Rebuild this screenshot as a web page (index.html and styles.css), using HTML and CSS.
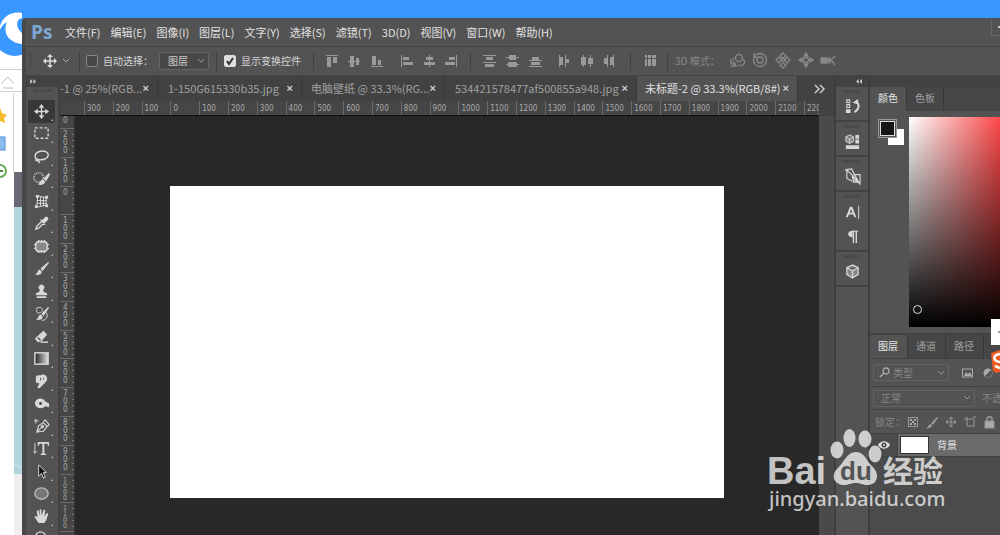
FILE: index.html
```html
<!DOCTYPE html>
<html lang="zh-CN">
<head>
<meta charset="utf-8">
<title>Ps</title>
<link rel="stylesheet" href="styles.css">
</head>
<body>
<svg class="browser" width="22" height="535" viewBox="0 0 22 535" aria-hidden="true">
  <rect width="22" height="535" fill="#fff"/><rect width="22" height="27" fill="#3898ff"/>
  <circle cx="20" cy="35" r="22" fill="#fff"/><circle cx="15" cy="34" r="22" fill="#3898ff"/>
  <path d="M0 26C3 16 12 11 22 13V18C16 19 15 27 22 33V44C10 43 2 34 7 22C3 24 1 27 0 30Z" fill="#fff"/>
  <path d="M0 69.500H22M0 91.500H22M13.500 93V172" stroke="#d2d2d2"/>
  <path d="M1 84L8 77L14 84M3 88H13" fill="none" stroke="#bbb"/>
  <path d="M0 108L2 113L7 115L4 118L5 123L0 121Z" fill="#f5bd2c"/>
  <rect x="-4" y="137" width="9" height="13" fill="#8bbcf0" stroke="#4e8fd6"/>
  <circle cx="0" cy="171" r="6" fill="#fff" stroke="#67a957" stroke-width="2"/><path d="M0 171H3" stroke="#448c34" stroke-width="2"/>
  <rect x="14" y="172" width="8" height="35" fill="#6b6974"/><rect x="14" y="207" width="8" height="267" fill="#b0d5dd"/>
  <rect x="14" y="474" width="8" height="61" fill="#eee"/><path d="M14 464L22 468" stroke="#d7e9ed"/>
</svg>
<main class="ps">
  <header class="menubar">
    <span class="logo">Ps</span>
    <nav class="menus"><button>文件(F)</button><button>编辑(E)</button><button>图像(I)</button><button>图层(L)</button><button>文字(Y)</button><button>选择(S)</button><button>滤镜(T)</button><button>3D(D)</button><button>视图(V)</button><button>窗口(W)</button><button>帮助(H)</button></nav>
    <button class="minimize" aria-label="最小化"></button>
  </header>
  <div class="options">
    <i class="grip"></i>
    <svg class="move-icon" width="30" height="16" viewBox="0 0 30 16"><g fill="none" stroke="#ddd" stroke-width="1.500"><path d="M8 3V13M3 8H13"/><path d="M21 6L24 9L27 6" stroke="#aaa" stroke-width="1"/></g><path d="M8 1L11 4H5ZM8 15L5 12H11ZM1 8L4 5V11ZM15 8L12 11V5Z" fill="#ddd"/></svg>
    <i class="rule"></i>
    <label class="check auto"><input type="checkbox">自动选择：</label>
    <select class="layer-select" aria-label="选择对象"><option>图层</option></select>
    <i class="rule"></i>
    <label class="check"><input type="checkbox" checked>显示变换控件</label>
    <i class="rule wide"></i>
    <svg class="align-icons" width="131" height="16" viewBox="0 0 131 16" fill="#999"><path d="M0 2H12V3H0ZM1 4H5V14H1ZM7 4H11V10H7ZM22 8H34V9H22ZM24 3H28V14H24ZM30 5H33V12H30ZM45 13H57V14H45ZM46 3H50V12H46ZM52 7H55V12H52ZM75 2H76V14H75ZM77 4H83V7H77ZM77 9H87V12H77ZM103 2H104V14H103ZM100 4H107V7H100ZM98 9H109V12H98ZM130 2H131V14H130ZM123 4H129V7H123ZM119 9H129V12H119Z"/></svg>
    <i class="rule wide"></i>
    <svg class="align-icons" width="134" height="16" viewBox="0 0 134 16" fill="#999"><path d="M0 2H13V3H0ZM3 4H10V7H3ZM0 9H13V10H0ZM2 11H11V14H2ZM23 4H36V5H23ZM26 2H33V7H26ZM23 11H36V12H23ZM25 9H34V14H25ZM46 7H59V8H46ZM49 4H56V7H49ZM46 13H59V14H46ZM48 9H57V12H48ZM76 2H77V14H76ZM77 4H80V12H77ZM82 2H83V14H82ZM83 6H86V10H83ZM100 2H101V14H100ZM98 4H103V12H98ZM107 2H108V14H107ZM105 5H110V11H105ZM121 5H124V11H121ZM124 2H125V14H124ZM127 4H130V12H127ZM130 2H131V14H130Z"/></svg>
    <i class="rule wide"></i>
    <svg class="dist" width="12" height="16" viewBox="0 0 12 16"><path d="M1 2H3V5H1ZM4 2H7V5H4ZM8 2H12V5H8ZM1 6H3V13H1ZM4 6H7V13H4ZM8 6H12V13H8Z" fill="#999"/></svg>
    <i class="rule"></i>
    <span class="mode">3D 模式：</span>
    <svg class="modes" width="108" height="18" viewBox="0 0 108 18" fill="none" stroke="#888" stroke-width="1.300"><circle cx="10" cy="6" r="3.500"/><path d="M6 6C-1 8 1 13 7 12M13 6C19 11 13 15 9 13M4 9L7 14H2"/><circle cx="31" cy="8" r="6.500"/><circle cx="31" cy="8" r="3"/><path d="M25 1V5H28"/><path d="M54 1L57 4L54 6L51 4ZM54 11L57 13L54 16L51 13ZM47 8L50 5L52 8L50 11ZM61 8L58 5L56 8L58 11Z"/><circle cx="54" cy="8" r="1.500"/><circle cx="77" cy="8" r="2.500"/><path d="M77 1L79 4H75ZM77 15L79 12H75ZM70 8L73 6V10ZM84 8L81 6V10Z" fill="#888"/><path d="M92 6H98V11H92ZM98 8L101 6V11L98 9Z" fill="#888"/><path d="M106 4L102 8L106 13"/></svg>
  </div>
  <div class="workspace">
    <aside class="toolbox">
      <div class="collapse"><svg width="7" height="5" viewBox="0 0 8 6"><path d="M0 0L3 3L0 6ZM4 0L7 3L4 6Z" fill="#ccc"/></svg></div>
      <i class="hgrip"></i>
      <div class="tools">
        <button class="on" aria-label="移动"><svg viewBox="0 0 18 18"><path d="M9 4V14M4 9H14"/><path class="f" d="M9 1L12 5H6ZM9 17L6 13H12ZM1 9L5 6V12ZM17 9L13 12V6Z"/></svg></button>
        <button aria-label="矩形选框"><svg viewBox="0 0 18 18"><rect x="2" y="3" width="14" height="11" stroke-dasharray="3 2"/></svg></button>
        <button aria-label="套索"><svg viewBox="0 0 18 18"><path d="M6 12C1 12 1 6 6 4S17 4 16 8S9 13 6 12ZM6 12C2 10 2 15 6 13L7 16"/></svg></button>
        <button aria-label="快速选择"><svg viewBox="0 0 18 18"><circle cx="6" cy="8" r="5" stroke-dasharray="1 1"/><path class="f" d="M17 3L11 9L14 12L18 5ZM10 10C7 11 8 14 5 15C9 17 13 15 13 12Z"/></svg></button>
        <button aria-label="透视裁剪"><svg viewBox="0 0 18 18"><path d="M5 3L14 5V13L4 15ZM8 4V14M11 4V14M4 8H14M4 11H14" stroke-width="1"/><path class="f" d="M3 2H6V5H3ZM13 3H16V6H13ZM2 13H5V16H2ZM13 12H16V15H13Z"/></svg></button>
        <button aria-label="吸管"><svg viewBox="0 0 18 18"><path d="M3 15L4 12L10 6L12 8L6 14ZM8 5L13 10"/><path class="f" d="M9 6L13 2C15 1 17 3 16 5L12 9Z"/></svg></button>
        <button aria-label="修补"><svg viewBox="0 0 18 18"><rect x="3" y="4" width="12" height="10" rx="3" fill="#888"/><path d="M6 2V4M9 2V4M12 2V4M6 14V16M9 14V16M12 14V16M1 7H3M1 11H3M15 7H17M15 11H17"/></svg></button>
        <button aria-label="画笔"><svg viewBox="0 0 18 18"><path class="f" d="M16 2L8 9L10 12L17 3ZM7 10C4 11 6 14 2 15C6 17 10 15 9 12Z"/></svg></button>
        <button aria-label="仿制图章"><svg viewBox="0 0 18 18"><path class="f" d="M7 9V7A3 3 0 1 1 11 7V9L15 11V13H3V11ZM4 14H14V16H4Z"/></svg></button>
        <button aria-label="历史记录画笔"><svg viewBox="0 0 18 18"><path d="M3 4C8 0 13 5 8 8C4 10 2 6 5 5M14 8C17 13 13 17 9 16" stroke-width="1"/><path class="f" d="M16 2L9 9L11 12L17 3ZM8 10C5 11 6 15 3 15C7 17 11 15 10 12Z"/></svg></button>
        <button aria-label="橡皮擦"><svg viewBox="0 0 18 18"><path class="f" d="M2 11L11 3L15 7L9 14L5 15Z"/><path d="M8 15H16"/><path d="M5 10L8 13" stroke="#555"/></svg></button>
        <button aria-label="渐变"><svg viewBox="0 0 18 18"><defs><linearGradient id="gr"><stop stop-color="#222"/><stop offset="1" stop-color="#ddd"/></linearGradient></defs><rect x="2" y="3" width="14" height="12" fill="url(#gr)"/></svg></button>
        <button aria-label="涂抹"><svg viewBox="0 0 18 18"><path class="f" d="M3 4C5 1 8 3 9 2C12 0 17 4 14 9L8 15C7 17 4 16 5 14L7 11L3 10Z"/><path d="M8 5V8M11 5V7" stroke="#555" stroke-width="1"/></svg></button>
        <button aria-label="加深"><svg viewBox="0 0 18 18"><path class="f" d="M2 8C4 2 11 3 13 7L17 9V13L13 12C9 16 2 14 2 8Z"/><circle cx="8" cy="9" r="1.500" fill="#444" stroke="none"/></svg></button>
        <button aria-label="钢笔"><svg viewBox="0 0 18 18"><path d="M4 15L6 8L11 5L15 9L11 14ZM4 15L9 10M11 4L13 2L17 7L15 9" stroke-width="1.200"/><circle cx="10" cy="9" r="1"/><path d="M3 1V6M1 3H6" stroke-width="1"/></svg></button>
        <button aria-label="文字"><svg viewBox="0 0 18 18"><path class="f" d="M5 2H17V6H16L15 4H12V14L14 15V16H8V15L10 14V4H7L6 6H5Z"/><path d="M2 3V14M0 12L2 14L4 12" stroke-width="1"/></svg></button>
        <button aria-label="选择"><svg viewBox="0 0 18 18"><path d="M6 2V14L9 11L11 16L13 15L11 10H14Z" fill="#111" stroke-width="1"/></svg></button>
        <button aria-label="椭圆"><svg viewBox="0 0 18 18"><ellipse cx="9" cy="9" rx="7" ry="6" fill="#777" stroke="#bbb"/></svg></button>
        <button aria-label="抓手"><svg viewBox="0 0 18 18"><path class="f" d="M6 16L2 10C1 8 3 8 4 9L5 10L4 4C4 2 6 2 6 4L7 8V2C7 1 9 1 9 2V8L11 3C11 1 13 2 13 3L12 9L14 6C15 5 17 6 16 7L14 13L12 16Z"/></svg></button>
        <button aria-label="缩放"><svg viewBox="0 0 18 18"><circle cx="8" cy="7" r="5"/><path d="M12 11L16 16"/></svg></button>
      </div>
    </aside>
    <section class="document">
      <div class="doc-tabs">
        <div class="doc-tab t1"><span>-1 @ 25%(RGB...</span><button aria-label="关闭">×</button></div>
        <div class="doc-tab t2"><span>1-150G615330b35.jpg</span><button aria-label="关闭">×</button></div>
        <div class="doc-tab t3"><span>电脑壁纸 @ 33.3%(RG...</span><button aria-label="关闭">×</button></div>
        <div class="doc-tab t4"><span>534421578477af500855a948.jpg</span><button aria-label="关闭">×</button></div>
        <div class="doc-tab active t5"><span>未标题-2 @ 33.3%(RGB/8#)</span><button aria-label="关闭">×</button></div>
        <button class="more" aria-label="更多"><svg width="12" height="10" viewBox="0 0 12 10"><path d="M1 1L5 5L1 9M6 1L10 5L6 9" fill="none" stroke="#ccc" stroke-width="1.500"/></svg></button>
      </div>
      <div class="hruler"><div class="hcells"><span>300</span><span>200</span><span>100</span><span>0</span><span>100</span><span>200</span><span>300</span><span>400</span><span>500</span><span>600</span><span>700</span><span>800</span><span>900</span><span>1000</span><span>1100</span><span>1200</span><span>1300</span><span>1400</span><span>1500</span><span>1600</span><span>1700</span><span>1800</span><span>1900</span><span>2000</span><span>2100</span></div><span class="last">2200</span></div>
      <div class="stage">
        <div class="vruler"><b>0</b><div class="vcells"><span>200</span><span>100</span><span>0</span><span>100</span><span>200</span><span>300</span><span>400</span><span>500</span><span>600</span><span>700</span><span>800</span><span>900</span><span class="k">1000</span><span class="k">1100</span><span></span></div></div>
        <div class="canvas"><div class="page"></div></div>
        <div class="vscroll"></div>
      </div>
    </section>
    <aside class="dock">
      <div class="collapse"><svg width="7" height="5" viewBox="0 0 8 6"><path d="M3 0L0 3L3 6ZM7 0L4 3L7 6Z" fill="#ccc"/></svg></div>
      <div class="group"><i class="hgrip"></i><button aria-label="历史记录"><svg viewBox="0 0 18 18"><path d="M3 2H6V5H3ZM3 7H6V10H3Z" stroke-width="1.200"/><path d="M13 4C17 7 16 12 11 15" stroke-width="2"/><path class="f" d="M2 12H7V16H2ZM9 5L15 1V7Z"/></svg></button></div>
      <div class="group"><i class="hgrip"></i><button aria-label="属性"><svg viewBox="0 0 18 18"><path d="M6 2L10 4V9L6 11L2 9V4ZM2 4L6 6L10 4M6 6V11" fill="#888" stroke-width="1"/><path class="f" d="M12 2H16V6H12ZM12 7H16V11H12ZM2 13H16V17H2Z"/></svg></button></div>
      <div class="group"><i class="hgrip"></i><button aria-label="画笔预设"><svg viewBox="0 0 18 18"><path d="M1 2L8 1L16 16L9 11V8L3 2V11L9 14M10 7H17V17L10 9V15H16" stroke-width="1.200"/></svg></button></div>
      <div class="group"><i class="hgrip"></i><button aria-label="字符"><svg viewBox="0 0 18 18"><path d="M3 14L7 4H8L12 14M5 10H10" stroke-width="2"/><path d="M15.500 2V16" stroke-width="1"/></svg></button><button aria-label="段落"><svg viewBox="0 0 18 18"><path class="f" d="M8 3H15V4H8ZM9 3V10C3 10 3 3 9 3Z"/><path d="M10 3V16M13 3V16"/></svg></button></div>
      <div class="group"><i class="hgrip"></i><button aria-label="3D"><svg viewBox="0 0 18 18"><path d="M9 2L15 5V12L9 16L3 12V5ZM3 5L9 8L15 5M9 8V16" fill="#888" stroke-width="1.300"/></svg></button></div>
    </aside>
    <aside class="panels">
      <div class="collapse"></div>
      <section class="color">
        <div class="tabs"><button class="active">颜色</button><button>色板</button></div>
        <div class="color-body">
          <div class="swatches"><svg width="27" height="28" viewBox="0 0 27 28"><rect x="10" y="10" width="16" height="16" fill="#fff"/><rect x="0.500" y="0.500" width="18" height="18" fill="#535353" stroke="#999"/><rect x="2.500" y="2.500" width="14" height="14" fill="#151515" stroke="#ddd"/></svg></div>
          <div class="field"><i class="marker"></i></div>
        </div>
      </section>
      <section class="layers">
        <div class="tabs"><button class="active">图层</button><button>通道</button><button>路径</button></div>
        <div class="filter"><div class="search"><svg width="12" height="12" viewBox="0 0 12 12"><circle cx="7" cy="4" r="3" fill="none" stroke="#aaa" stroke-width="1.300"/><path d="M5 6L1 10" stroke="#aaa" stroke-width="1.500"/></svg><select aria-label="类型"><option>类型</option></select></div>
          <svg class="filter-icons" width="34" height="12" viewBox="0 0 34 12"><rect x="1.500" y="2" width="10" height="8" fill="none" stroke="#aaa"/><path d="M3 9L5 5L7 7L9 5L11 9Z" fill="#aaa"/><circle cx="27" cy="6" r="4.500" fill="#aaa"/><path d="M30 3A4 4 0 0 1 24 9Z" fill="#555"/></svg></div>
        <div class="blend"><select aria-label="混合模式"><option>正常</option></select><span>不透明度</span></div>
        <div class="lock"><span>锁定：</span><svg width="90" height="14" viewBox="0 0 90 14" fill="none" stroke="#999"><rect x="1.500" y="2.500" width="9" height="9"/><path d="M3 4H5V6H3ZM7 4H9V6H7ZM5 6H7V8H5ZM3 8H5V10H3ZM7 8H9V10H7Z" fill="#aaa" stroke="none"/><path d="M30 2L24 8L26 10L31 3ZM23 9C21 10 22 12 19 13C23 14 25 12 25 10Z" fill="#999" stroke="none"/><path d="M44 2V12M39 7H49M42 4L44 2L46 4M42 10L44 12L46 10M41 5L39 7L41 9M47 5L49 7L47 9M60 2V11H66M57 4H67V12M66 2H69"/><path d="M78 6H87V13H78Z" fill="#aaa"/><path d="M80 6V4C80 1 85 1 85 4V6" stroke-width="1.500"/></svg></div>
        <div class="layer"><button class="eye" aria-label="可见"><svg width="12" height="10" viewBox="0 0 12 10"><path d="M0 5C3 0 9 0 12 5C9 10 3 10 0 5Z" fill="#ddd"/><circle cx="6" cy="5" r="2.500" fill="#444"/><circle cx="6" cy="5" r="1" fill="#ddd"/></svg></button><div class="row"><i class="thumb"></i><span>背景</span></div></div>
      </section>
    </aside>
  </div>
</main>
<svg class="ime" width="9" height="56" viewBox="0 0 9 56" aria-hidden="true"><path d="M0 0H9V26H0Z" fill="#fff"/><path d="M7 13H9" stroke="#333"/><path d="M0 34L9 31V53L5 54L2 52Z" fill="#f15a24"/><path d="M9 35C1 36 2 42 9 43M4 47L9 49" fill="none" stroke="#fff" stroke-width="2.500"/></svg>
<svg class="watermark" width="190" height="90" viewBox="0 0 190 90" aria-label="Baidu 经验">
  <g fill="#fff" fill-opacity="0.72"><text class="wm-bai" x="1" y="56">Bai</text>
  <ellipse cx="71" cy="22" rx="6.500" ry="8.500"/><ellipse cx="83.500" cy="10" rx="6" ry="9"/><ellipse cx="99" cy="11" rx="6.500" ry="8.500"/><ellipse cx="109" cy="26" rx="6.500" ry="8.500"/>
  <path d="M90 24C99 24 100 33 107 39C115 48 110 57 102 57C96 57 95 55 90 55C85 55 83 57 78 57C68 57 64 47 72 40C79 33 81 24 90 24Z"/>
  <text class="wm-cjk" x="117" y="54">经验</text><text class="wm-url" x="3" y="78">jingyan.baidu.com</text></g>
  <text class="wm-du" x="74" y="52">du</text>
</svg>
</body>
</html>
```
FILE: styles.css
```css
* { box-sizing: border-box; }
body { margin: 0; height: 100vh; overflow: hidden; position: relative; background: #3898ff; color: #ccc; font: 10px/14px "Noto Sans CJK SC", sans-serif; }
button { border: 0; padding: 0; background: none; color: inherit; font: inherit; }
select { appearance: none; border: 1px solid #646464; border-radius: 2px; font: inherit; color: inherit; padding: 0 8px; background: #484848 url("data:image/svg+xml,%3Csvg xmlns='http://www.w3.org/2000/svg' width='8' height='6'%3E%3Cpath d='M1 1L4 4L7 1' fill='none' stroke='%23999'/%3E%3C/svg%3E") no-repeat right 3px center; }
.browser { position: absolute; left: 0; top: 0; }
.ps { margin: 18px 0 0 22px; height: calc(100vh - 18px); display: flex; flex-direction: column; background: #535353; border-left: 3px solid #484848; border-top: 1px solid #484f57; border-top-left-radius: 4px; overflow: hidden; }
.menubar { height: 27px; flex: none; display: flex; align-items: center; padding-left: 6px; padding-bottom: 2px; }
.logo { width: 34px; font: bold 19px/24px "Open Sans", sans-serif; color: #7da7d3; }
.menus { display: flex; gap: 10px; font-size: 11px; color: #e2e2e2; flex: 1; white-space: nowrap; }
.minimize { align-self: start; width: 9px; height: 17px; border: 1px solid #666; border-width: 0 0 1px 1px; }
.minimize::after { content: ""; display: block; margin: 0 0 0 6px; width: 2px; height: 2px; background: #ccc; }
.options { height: 30px; flex: none; display: flex; align-items: center; border-top: 1px solid #424242; border-bottom: 1px solid #424242; border-left: 1px solid #424242; padding-left: 3px; white-space: nowrap; }
.grip { width: 3px; height: 16px; background: repeating-linear-gradient(#444 0 1px, #555 1px 2px); }
.move-icon { margin-left: 10px; }
.rule { width: 1px; height: 19px; background: #424242; margin: 0 7px; flex: none; }
.rule.wide { margin: 0 10px 0 12px; }
.move-icon + .rule { margin: 0 6px 0 7px; }
.check { display: flex; align-items: center; gap: 5px; color: #d5d5d5; }
.check.auto { width: 73px; }
.auto + .layer-select { margin-left: 0; }
.check input { appearance: none; width: 12px; height: 12px; margin: 0; border: 1px solid #888; border-radius: 2px; background: #464646; flex: none; }
.check input:checked { border-color: #ddd; background: #ddd url("data:image/svg+xml,%3Csvg xmlns='http://www.w3.org/2000/svg' width='10' height='10'%3E%3Cpath d='M2 5L4 8L8 2' fill='none' stroke='%23333' stroke-width='2'/%3E%3C/svg%3E"); }
.layer-select { width: 50px; height: 18px; }
.align-icons { margin: 0 1px 0 2px; }
.dist { margin: 0 4px 0 3px; }
.mode { color: #888; width: 54px; }
.workspace { flex: 1; min-height: 0; display: flex; background: #424242; }
.collapse { height: 11px; flex: none; background: #424242; display: flex; align-items: center; }
.hgrip { display: block; width: 17px; height: 3px; background: repeating-linear-gradient(90deg, #424242 0 1px, #535353 1px 2px); }
.toolbox { width: 34px; flex: none; border-left: 1px solid #424242; border-right: 1px solid #424242; display: flex; flex-direction: column; background: #535353; }
.toolbox .collapse { padding-left: 4px; }
.toolbox .hgrip { margin: 2px 8px 8px; flex: none; }
.tools { height: 450px; flex: none; display: grid; grid-template-rows: repeat(20, 1fr); }
.tools button { width: 27px; margin-left: 2px; position: relative; display: flex; align-items: center; justify-content: center; }
.tools .on { background: #383838; border-radius: 2px; }
.tools button::after { content: ""; position: absolute; right: 2px; bottom: 2px; border: 1px solid #bbb; border-left-color: transparent; border-top-color: transparent; }
.tools svg, .group svg { width: 17px; height: 17px; fill: none; stroke: #d8d8d8; stroke-width: 1.5px; }
.tools .f, .group .f { fill: #d8d8d8; stroke: none; }
.document { flex: 1; min-width: 0; display: flex; flex-direction: column; margin-left: 1px; }
.doc-tabs { height: 25px; flex: none; display: flex; font-size: 11px; color: #a0a0a0; white-space: nowrap; }
.doc-tab { display: flex; align-items: center; justify-content: space-between; padding: 0 8px 1px 9px; border-right: 1px solid #383838; overflow: hidden; }
.doc-tab span { min-width: 0; }
.doc-tab button { font: bold 11px/14px "Liberation Sans", sans-serif; color: #ccc; }
.t1 { flex: 0 1 98px; padding-left: 0; }
.t2 { flex: 0 1 144px; padding-left: 10px; }
.t3 { flex: 0 1 143px; }
.t4 { flex: 0 1 192px; padding-left: 10px; }
.t5 { flex: 0 1 161px; padding-left: 8px; }
.doc-tab.active { background: #535353; color: #e0e0e0; }
.more { flex: 1; padding-left: 16px; display: flex; align-items: center; }
.hruler { height: 15px; flex: none; display: flex; padding-left: 24px; margin-right: 15px; background: #464646; border-bottom: 1px solid #111; font: 8px/16px "DejaVu Sans Condensed", "DejaVu Sans", sans-serif; color: #aaa; overflow: hidden; }
.hcells { flex: 1; display: grid; grid-template-columns: repeat(25, 1fr); }
.hcells span, .last { border-left: 1px solid #6b6b6b; padding-left: 2px; background: repeating-linear-gradient(90deg, transparent 0 13px, #777 13px 14px) bottom / 100% 2px no-repeat; }
.last { width: 15px; overflow: hidden; }
.stage { flex: 1; min-height: 0; display: flex; }
.vruler { width: 15px; flex: none; background: #464646; border-right: 1px solid #303030; font: 8px/8px "DejaVu Sans Condensed", "DejaVu Sans", sans-serif; color: #aaa; overflow: hidden; }
.vruler b { display: block; height: 12px; padding: 1px 0 0 3px; font-weight: normal; }
.vcells { height: 432px; display: grid; grid-template-rows: repeat(15, 1fr); }
.vcells span { border-top: 1px solid #6b6b6b; padding: 2px 6px 0 3px; word-break: break-all; overflow: hidden; background: repeating-linear-gradient(transparent 0 5px, #777 5px 6px) right / 2px 100% no-repeat; }
.vcells .k { font-size: 7px; line-height: 6px; }
.canvas { flex: 1; background: #282828; padding: 70px 95px; }
.page { background: #fff; aspect-ratio: 16 / 9; }
.vscroll { width: 15px; background: #4a4a4a; }
.dock { width: 35px; flex: none; border: 2px solid #3e3e3e; border-width: 0 1px 0 2px; background: #535353; }
.dock .collapse { padding-left: 20px; }
.group { border-bottom: 2px solid #424242; padding-top: 3px; }
.group .hgrip { margin-left: 7px; }
.group button { display: flex; width: 32px; height: 25px; align-items: center; justify-content: center; padding-top: 3px; }
.group button:last-child { height: 27px; padding-bottom: 3px; }
.panels { width: 131px; flex: none; border-left: 1px solid #3e3e3e; background: #535353; display: flex; flex-direction: column; }
.tabs { height: 24px; display: flex; background: #464646; color: #a0a0a0; }
.tabs button { padding: 0 8px 2px; border-right: 1px solid #383838; }
.tabs .active { background: #535353; color: #e8e8e8; }
.layers .tabs button { padding: 0 9px 2px 8px; }
.color-body { display: flex; padding: 6px 0 6px 8px; border-bottom: 2px solid #424242; }
.swatches { width: 31px; padding-top: 2px; }
.field { flex: 1; height: 210px; position: relative; overflow: hidden; background: linear-gradient(transparent, #000), linear-gradient(90deg, #fff, #f00) left top / 127px 100%; }
.marker { position: absolute; left: 4px; bottom: 13px; width: 9px; height: 9px; border: 1px solid #ddd; border-radius: 50%; }
.layers { flex: 1; background: #4b4b4b; white-space: nowrap; overflow: hidden; color: #858585; }
.layers > div { border-bottom: 1px solid #424242; }
.filter, .blend, .lock { background: #535353; display: flex; align-items: center; }
.filter { height: 28px; padding-left: 3px; gap: 12px; }
.search { width: 76px; height: 17px; border: 1px solid #626262; border-radius: 2px; display: flex; align-items: center; padding-left: 5px; flex: none; }
.search select { flex: 1; border: 0; height: 15px; padding-left: 2px; background-color: transparent; }
.filter-icons { flex: none; }
.blend { height: 23px; padding-left: 3px; gap: 7px; }
.blend select { width: 102px; height: 17px; flex: none; padding-left: 7px; background-color: transparent; border-color: #626262; }
.lock { height: 24px; padding-left: 5px; gap: 2px; }
.lock span { width: 30px; flex: none; }
.lock svg { flex: none; }
.layer { display: flex; height: 23px; color: #e8e8e8; }
.eye { width: 27px; display: flex; align-items: center; justify-content: center; }
.row { flex: 1; display: flex; align-items: center; gap: 9px; padding-left: 3px; background: #6a6a6a; border-left: 1px solid #424242; }
.thumb { width: 27px; height: 16px; background: #fff; outline: 1px solid #333; }
.ime { position: absolute; right: 0; top: 319px; }
.watermark { position: absolute; right: 44px; bottom: 17px; }
.wm-bai { font: bold 38px "Liberation Sans", sans-serif; }
.wm-du { font: bold 26px "Liberation Sans", sans-serif; fill: #555; }
.wm-cjk { font: bold 30px "Noto Sans CJK SC", sans-serif; }
.wm-url { font: 500 20px "Noto Sans", sans-serif; }
```
